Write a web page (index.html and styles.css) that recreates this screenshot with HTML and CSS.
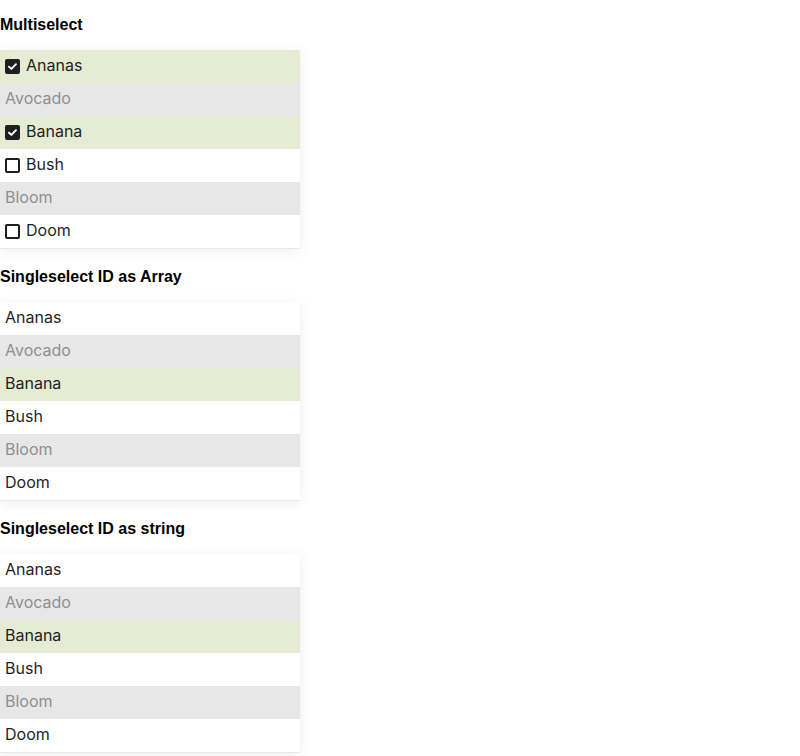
FILE: index.html
```html
<!DOCTYPE html>
<html>
<head>
<meta charset="utf-8">
<link rel="stylesheet" href="styles.css">
</head>
<body>
<section class="group">
  <h3 class="title">Multiselect</h3>
  <ul class="list">
    <li class="item selected"><span class="box checked"><svg viewBox="0 0 15 15" width="15" height="15"><path d="M4 7.7 L6.4 9.9 L11 5.2" fill="none" stroke="#fff" stroke-width="1.9" stroke-linecap="round" stroke-linejoin="round"/></svg></span>Ananas</li>
    <li class="item disabled">Avocado</li>
    <li class="item selected"><span class="box checked"><svg viewBox="0 0 15 15" width="15" height="15"><path d="M4 7.7 L6.4 9.9 L11 5.2" fill="none" stroke="#fff" stroke-width="1.9" stroke-linecap="round" stroke-linejoin="round"/></svg></span>Banana</li>
    <li class="item"><span class="box"></span>Bush</li>
    <li class="item disabled">Bloom</li>
    <li class="item"><span class="box"></span>Doom</li>
  </ul>
</section>
<section class="group">
  <h3 class="title">Singleselect ID as Array</h3>
  <ul class="list">
    <li class="item">Ananas</li>
    <li class="item disabled">Avocado</li>
    <li class="item selected">Banana</li>
    <li class="item">Bush</li>
    <li class="item disabled">Bloom</li>
    <li class="item">Doom</li>
  </ul>
</section>
<section class="group">
  <h3 class="title">Singleselect ID as string</h3>
  <ul class="list">
    <li class="item">Ananas</li>
    <li class="item disabled">Avocado</li>
    <li class="item selected">Banana</li>
    <li class="item">Bush</li>
    <li class="item disabled">Bloom</li>
    <li class="item">Doom</li>
  </ul>
</section>
</body>
</html>
```
FILE: styles.css
```css
html, body {
  margin: 0;
  padding: 0;
  background: #fff;
}
body {
  font-family: "Liberation Sans", Arial, sans-serif;
}
.group {
  display: flex;
  flex-direction: column;
  width: 300px;
}
.title {
  margin: 0;
  height: 50px;
  padding-top: 16px;
  box-sizing: border-box;
  font-size: 16px;
  line-height: 18px;
  font-weight: bold;
  color: #000;
}
.list {
  list-style: none;
  margin: 0 0 3px 0;
  padding: 0;
  box-shadow: 0 2px 12px rgba(0, 0, 0, 0.07);
  border-bottom: 1px solid #e9e9e9;
}
.item {
  display: flex;
  align-items: center;
  height: 33px;
  padding: 0 5px 3px 5px;
  box-sizing: border-box;
  font-family: Inter, "Noto Sans", sans-serif;
  font-size: 16px;
  color: #1f1f1f;
  background: #fff;
}
.item.selected {
  background: #e6ebd4;
}
.item.disabled {
  background: #e7e7e7;
  color: #8f8f8f;
}
.box {
  width: 15px;
  height: 15px;
  box-sizing: border-box;
  border: 2px solid #1f1f1f;
  border-radius: 2px;
  margin: 3px 6px 0 0;
  display: flex;
  align-items: center;
  justify-content: center;
  flex: none;
}
.box.checked {
  background: #1f1f1f;
  border: none;
}
.box svg {
  display: block;
}
```
